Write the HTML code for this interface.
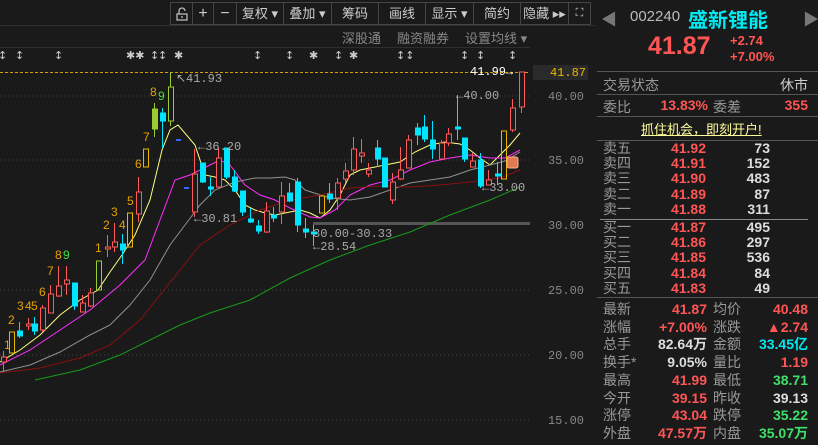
<!DOCTYPE html>
<html><head><meta charset="utf-8"><style>
*{margin:0;padding:0;box-sizing:border-box}
body{width:818px;height:445px;background:#1a1a1a;overflow:hidden;font-family:"Liberation Sans","Noto Sans CJK SC",sans-serif;position:relative;color:#aaa}
.a{position:absolute;white-space:nowrap}
.tb{position:absolute;top:2px;height:23px;border:1px solid #454545;color:#ccc;font-size:13px;text-align:center;line-height:21px}
.r{color:#ff5555}.g{color:#3ee06a}.w{color:#ddd}.c{color:#00e8f0}
.lb{font-size:14px;color:#999}
.v{font-size:14px;font-weight:bold;text-align:right}
.hl{position:absolute;left:597px;width:221px;height:1px;background:#555}
</style></head><body>
<svg class="a" style="left:0;top:0" width="595" height="445">
<line x1="0" y1="25.5" x2="595" y2="25.5" stroke="#2e2e2e"/>
<line x1="0" y1="47.5" x2="530" y2="47.5" stroke="#2e2e2e"/>
<g stroke="#444" stroke-dasharray="1,3">
<line x1="0" y1="96" x2="530" y2="96"/><line x1="0" y1="160" x2="530" y2="160"/><line x1="0" y1="290" x2="530" y2="290"/><line x1="0" y1="355" x2="530" y2="355"/><line x1="0" y1="420" x2="530" y2="420"/>
</g>
<rect x="313" y="222" width="217" height="3" fill="#555"/>
<line x1="0" y1="72.5" x2="530" y2="72.5" stroke="#d4a000" stroke-dasharray="3,2"/>
<g fill="none" stroke-width="1">
<polyline stroke="#ffff80" points="0,362 20,350 40,335 60,315 80,300 98,290 110,272 122,255 135,235 150,200 162,150 170,130 178,125 195,145 205,175 215,177 225,180 235,190 245,205 255,210 265,213 275,215 290,212 300,210 310,213 320,218 330,210 340,195 350,175 360,170 370,168 385,165 400,162 415,152 430,145 445,142 460,144 470,150 480,158 490,165 500,155 510,145 520,133"/>
<polyline stroke="#ff30ff" points="0,365 30,350 60,330 90,310 120,285 145,260 160,220 175,180 190,175 210,165 220,160 230,165 245,185 260,195 275,200 290,208 310,217 320,218 335,210 350,195 370,185 390,180 410,170 430,162 450,158 470,155 490,158 505,158 520,150"/>
<polyline stroke="#909090" points="0,372 30,365 60,352 90,335 110,325 130,305 150,280 170,245 185,225 200,205 215,190 235,182 255,178 270,178 285,177 295,180 305,190 330,198 350,200 370,197 390,190 410,183 430,180 450,177 470,170 490,165 505,161 520,152"/>
<polyline stroke="#8b1010" points="0,373 40,368 80,358 110,345 140,320 160,295 180,270 200,245 230,225 260,210 290,200 320,195 350,188 380,186 410,187 440,185 470,182 500,178 520,170"/>
<polyline stroke="#1a9a1a" points="35,380 80,370 120,355 150,340 180,325 210,313 250,300 290,278 330,260 370,245 410,232 450,215 490,200 520,187"/>
</g>
<g id="cd">
<!-- x,top,h,hi,lo -->
<g stroke="#ff5a5a" fill="#1a1a1a">
<line x1="3.5" y1="351" x2="3.5" y2="372"/><rect x="1.5" y="357" width="5" height="5"/>
<line x1="28.5" y1="318" x2="28.5" y2="330"/><rect x="26.5" y="324" width="5" height="2"/>
<line x1="42.5" y1="305" x2="42.5" y2="332"/><rect x="40.5" y="308" width="5" height="22"/>
<line x1="50.5" y1="285" x2="50.5" y2="313"/><rect x="48.5" y="294" width="5" height="19"/>
<line x1="58.5" y1="266" x2="58.5" y2="297"/><rect x="56.5" y="286" width="5" height="10"/>
<line x1="66.5" y1="266" x2="66.5" y2="295"/><rect x="64.5" y="280" width="5" height="4"/>
<line x1="82.5" y1="295" x2="82.5" y2="312"/><rect x="80.5" y="303" width="5" height="9"/>
<line x1="90.5" y1="288" x2="90.5" y2="307"/><rect x="88.5" y="293" width="5" height="13"/>
<line x1="107.5" y1="235" x2="107.5" y2="257"/><rect x="105.5" y="247" width="5" height="2"/>
<line x1="114.5" y1="223" x2="114.5" y2="252"/><rect x="112.5" y="242" width="5" height="5"/>
<line x1="138.5" y1="177" x2="138.5" y2="222"/><rect x="136.5" y="192" width="5" height="22"/>
<line x1="194.5" y1="149" x2="194.5" y2="217"/><rect x="192.5" y="174" width="5" height="38"/>
<line x1="218.5" y1="148" x2="218.5" y2="188"/><rect x="216.5" y="158" width="5" height="29"/>
<line x1="266.5" y1="202" x2="266.5" y2="233"/><rect x="264.5" y="211" width="5" height="21"/>
<line x1="281.5" y1="182" x2="281.5" y2="224"/><rect x="279.5" y="196" width="5" height="16"/>
<line x1="337.5" y1="178" x2="337.5" y2="210"/><rect x="335.5" y="183" width="5" height="15"/>
<line x1="345.5" y1="163" x2="345.5" y2="183"/><rect x="343.5" y="171" width="5" height="8"/>
<line x1="353.5" y1="137" x2="353.5" y2="175"/><rect x="351.5" y="149" width="5" height="21"/>
<line x1="361.5" y1="139" x2="361.5" y2="163"/><rect x="359.5" y="153" width="5" height="3"/>
<line x1="368.5" y1="163" x2="368.5" y2="177"/><rect x="366.5" y="170" width="5" height="4"/>
<line x1="392.5" y1="173" x2="392.5" y2="204"/><rect x="390.5" y="182" width="5" height="18"/>
<line x1="400.5" y1="147" x2="400.5" y2="180"/><rect x="398.5" y="170" width="5" height="9"/>
<line x1="408.5" y1="135" x2="408.5" y2="168"/><rect x="406.5" y="140" width="5" height="28"/>
<line x1="441.5" y1="140" x2="441.5" y2="160"/><rect x="439.5" y="143" width="5" height="16"/>
<line x1="448.5" y1="128" x2="448.5" y2="146"/><rect x="446.5" y="134" width="5" height="9"/>
<line x1="472.5" y1="153" x2="472.5" y2="167"/><rect x="470.5" y="161" width="5" height="6"/>
<line x1="488.5" y1="170" x2="488.5" y2="185"/><rect x="486.5" y="180" width="5" height="5"/>
<line x1="512.5" y1="99" x2="512.5" y2="132"/><rect x="510.5" y="108" width="5" height="22"/>
<line x1="521.5" y1="72" x2="521.5" y2="113"/><rect x="519.5" y="72" width="5" height="35"/>
</g>
<g stroke="#00e5ff" fill="#00e5ff">
<line x1="19.5" y1="322" x2="19.5" y2="338"/><rect x="17.5" y="331" width="5" height="5"/>
<line x1="34.5" y1="317" x2="34.5" y2="335"/><rect x="32.5" y="324" width="5" height="7"/>
<line x1="74.5" y1="283" x2="74.5" y2="310"/><rect x="72.5" y="283" width="5" height="23"/>
<line x1="122.5" y1="234" x2="122.5" y2="264"/><rect x="120.5" y="244" width="5" height="6"/>
<line x1="162.5" y1="108" x2="162.5" y2="148"/><rect x="160.5" y="113" width="5" height="8"/>
<line x1="202.5" y1="163" x2="202.5" y2="183"/><rect x="200.5" y="163" width="5" height="19"/>
<line x1="210.5" y1="177" x2="210.5" y2="196"/><rect x="208.5" y="187" width="5" height="2"/>
<line x1="226.5" y1="148" x2="226.5" y2="179"/><rect x="224.5" y="148" width="5" height="29"/>
<line x1="234.5" y1="170" x2="234.5" y2="192"/><rect x="232.5" y="177" width="5" height="14"/>
<line x1="242.5" y1="191" x2="242.5" y2="216"/><rect x="240.5" y="191" width="5" height="21"/>
<line x1="250.5" y1="208" x2="250.5" y2="223"/><rect x="248.5" y="219" width="5" height="3"/>
<line x1="258.5" y1="220" x2="258.5" y2="234"/><rect x="256.5" y="226" width="5" height="5"/>
<line x1="273.5" y1="207" x2="273.5" y2="222"/><rect x="271.5" y="215" width="5" height="3"/>
<line x1="289.5" y1="183" x2="289.5" y2="202"/><rect x="287.5" y="193" width="5" height="8"/>
<line x1="297.5" y1="178" x2="297.5" y2="232"/><rect x="295.5" y="182" width="5" height="43"/>
<line x1="305.5" y1="218" x2="305.5" y2="238"/><rect x="303.5" y="229" width="5" height="3"/>
<line x1="313.5" y1="225" x2="313.5" y2="246"/><rect x="311.5" y="232" width="5" height="2"/>
<line x1="329.5" y1="183" x2="329.5" y2="203"/><rect x="327.5" y="194" width="5" height="5"/>
<line x1="377.5" y1="140" x2="377.5" y2="167"/><rect x="375.5" y="148" width="5" height="11"/>
<line x1="384.5" y1="158" x2="384.5" y2="187"/><rect x="382.5" y="158" width="5" height="29"/>
<line x1="417.5" y1="123" x2="417.5" y2="145"/><rect x="415.5" y="128" width="5" height="7"/>
<line x1="424.5" y1="115" x2="424.5" y2="142"/><rect x="422.5" y="127" width="5" height="12"/>
<line x1="432.5" y1="121" x2="432.5" y2="159"/><rect x="430.5" y="140" width="5" height="9"/>
<line x1="457.5" y1="95" x2="457.5" y2="140"/><rect x="455.5" y="127" width="5" height="2"/>
<line x1="464.5" y1="138" x2="464.5" y2="162"/><rect x="462.5" y="138" width="5" height="21"/>
<line x1="480.5" y1="153" x2="480.5" y2="188"/><rect x="478.5" y="160" width="5" height="26"/>
<line x1="497.5" y1="162" x2="497.5" y2="185"/><rect x="495.5" y="174" width="5" height="2"/>
</g>
<g fill="none" stroke="#e8b800"><rect x="9.5" y="332" width="5" height="21"/><rect x="127.5" y="213" width="5" height="34"/><rect x="143.5" y="149" width="5" height="18"/><rect x="319.5" y="196" width="5" height="17"/><rect x="501.5" y="131" width="5" height="48"/></g>
<g stroke="#9acd32"><rect x="96.5" y="261" width="5" height="29" fill="none"/><line x1="154.5" y1="103" x2="154.5" y2="137"/><rect x="152.5" y="109" width="5" height="20" fill="#9acd32"/><line x1="170.5" y1="72" x2="170.5" y2="126"/><rect x="168.5" y="87" width="5" height="34" fill="#1a1a1a"/></g>
<rect x="176" y="139" width="5" height="2" fill="#3366ff"/><rect x="184" y="187" width="5" height="2" fill="#3366ff"/>
<rect x="507" y="157" width="11" height="11" rx="2" fill="#e07a50" stroke="#ffb090"/>
</g>
<g font-family="Liberation Mono,monospace" font-size="12" fill="#aaa">
<text x="176" y="82">↖41.93</text><text x="198" y="150">←36.20</text><text x="194" y="222">←30.81</text><text x="313" y="237">30.00-30.33</text><text x="313" y="250">←28.54</text><text x="456" y="99">←40.00</text><text x="482" y="191">←33.00</text><text x="470" y="75" fill="#fff">41.99→</text>
</g>
<g font-size="12" font-family="Liberation Sans,sans-serif" fill="#e8a000">
<text x="4" y="349">1</text><text x="8" y="324">2</text><text x="17" y="310">3</text><text x="25" y="310">4</text><text x="31" y="310">5</text><text x="39" y="296">6</text><text x="47" y="275">7</text><text x="55" y="259">8</text><text x="63" y="259" fill="#3ee03e">9</text><text x="95" y="252">1</text><text x="103" y="229">2</text><text x="111" y="216">3</text><text x="119" y="229">4</text><text x="127" y="205">5</text><text x="135" y="168">6</text><text x="143" y="141">7</text><text x="150" y="96">8</text><text x="158" y="100" fill="#3ee03e">9</text>
</g>
<g font-size="11" fill="#ccc" font-family="DejaVu Sans,sans-serif">
<text x="-2" y="59">↕</text><text x="15" y="59">↕</text><text x="54" y="59">↕</text><text x="126" y="59">✱✱</text><text x="150" y="59">↕</text><text x="158" y="59">↕</text><text x="174" y="59">✱</text><text x="253" y="59">↕</text><text x="285" y="59">↕</text><text x="309" y="59">✱</text><text x="334" y="59">↕</text><text x="349" y="59">✱</text><text x="396" y="59">↕↕</text><text x="460" y="59">↕</text><text x="476" y="59">↕</text><text x="508" y="59">↕</text>
</g>
<rect x="533" y="65" width="55" height="15" fill="#2a2a2a"/>
<g font-family="Liberation Mono,monospace" font-size="12" fill="#888" text-anchor="end">
<text x="586" y="76" fill="#e8b800">41.87</text><text x="584" y="100">40.00</text><text x="584" y="164">35.00</text><text x="584" y="229">30.00</text><text x="584" y="294">25.00</text><text x="584" y="359">20.00</text><text x="584" y="424">15.00</text>
</g>
<line x1="595.5" y1="0" x2="595.5" y2="445" stroke="#555"/>
</svg>
<div class="tb" style="left:170px;width:23px"><svg width="14" height="14" viewBox="0 0 14 14" style="margin-top:4px" fill="none" stroke="#bbb" stroke-width="1.3"><rect x="2" y="7" width="10" height="6"/><path d="M4 7V4a3 3 0 0 1 6 0"/><path d="M7 9v2"/></svg></div>
<div class="tb" style="left:192px;width:22px;font-size:16px">+</div>
<div class="tb" style="left:213px;width:24px;font-size:16px">−</div>
<div class="tb" style="left:236px;width:48px">复权 ▾</div>
<div class="tb" style="left:283px;width:49px">叠加 ▾</div>
<div class="tb" style="left:331px;width:48px">筹码</div>
<div class="tb" style="left:378px;width:48px">画线</div>
<div class="tb" style="left:425px;width:49px">显示 ▾</div>
<div class="tb" style="left:473px;width:48px">简约</div>
<div class="tb" style="left:520px;width:49px">隐藏 ▸▸</div>
<div class="tb" style="left:568px;width:23px;font-size:11px">⛶</div>
<div class="a" style="left:342px;top:28px;font-size:13px;color:#888">深股通</div>
<div class="a" style="left:397px;top:28px;font-size:13px;color:#888">融资融券</div>
<div class="a" style="left:465px;top:28px;font-size:13px;color:#888">设置均线 ▾</div>

<div class="a" style="left:601px;top:6px;font-size:16px;color:#777">◀</div>
<div class="a" style="left:630px;top:8px;font-size:15px;color:#bbb">002240</div>
<div class="a" style="left:688px;top:4px;font-size:20px;font-weight:bold;color:#00e8f0">盛新锂能</div>
<div class="a" style="left:803px;top:6px;font-size:16px;color:#777">▶</div>
<div class="a" style="left:648px;top:32px;font-size:25px;font-weight:bold;color:#ff5555">41.87</div>
<div class="a" style="left:730px;top:33px;font-size:13px;font-weight:bold;color:#ff5555">+2.74</div>
<div class="a" style="left:730px;top:49px;font-size:13px;font-weight:bold;color:#ff5555">+7.00%</div>
<div class="hl" style="top:71px"></div>
<div class="a lb" style="left:603px;top:75px">交易状态</div><div class="a" style="left:780px;top:75px;font-size:14px;color:#ccc">休市</div>
<div class="hl" style="top:94px"></div>
<div class="a lb" style="left:603px;top:97px">委比</div><div class="a v r" style="left:640px;width:68px;top:97px">13.83%</div><div class="a lb" style="left:713px;top:97px">委差</div><div class="a v r" style="left:760px;width:48px;top:97px">355</div>
<div class="hl" style="top:116px"></div>
<div class="a" style="left:641px;top:119px;font-size:13px;color:#ffff99;text-decoration:underline">抓住机会，即刻开户!</div>
<div class="hl" style="top:140px"></div>
<div class="a lb" style="left:603px;top:141px;line-height:15.2px">卖五<br>卖四<br>卖三<br>卖二<br>卖一</div>
<div class="a v r" style="left:650px;width:56px;top:141px;line-height:15.2px">41.92<br>41.91<br>41.90<br>41.89<br>41.88</div>
<div class="a v w" style="left:720px;width:50px;top:141px;line-height:15.2px">73<br>152<br>483<br>87<br>311</div>
<div class="a" style="left:600px;top:219px;width:208px;height:1px;background:#888"></div>
<div class="a lb" style="left:603px;top:220px;line-height:15.2px">买一<br>买二<br>买三<br>买四<br>买五</div>
<div class="a v r" style="left:650px;width:56px;top:220px;line-height:15.2px">41.87<br>41.86<br>41.85<br>41.84<br>41.83</div>
<div class="a v w" style="left:720px;width:50px;top:220px;line-height:15.2px">495<br>297<br>536<br>84<br>49</div>
<div class="hl" style="top:297px"></div>
<div class="a lb" style="left:603px;top:301px;line-height:17.7px">最新<br>涨幅<br>总手<br>换手*<br>最高<br>今开<br>涨停<br>外盘</div>
<div class="a v" style="left:640px;width:67px;top:301px;line-height:17.7px"><span class="r">41.87</span><br><span class="r">+7.00%</span><br><span class="w">82.64万</span><br><span class="w">9.05%</span><br><span class="r">41.99</span><br><span class="r">39.15</span><br><span class="r">43.04</span><br><span class="r">47.57万</span></div>
<div class="a lb" style="left:713px;top:301px;line-height:17.7px">均价<br>涨跌<br>金额<br>量比<br>最低<br>昨收<br>跌停<br>内盘</div>
<div class="a v" style="left:740px;width:68px;top:301px;line-height:17.7px"><span class="r">40.48</span><br><span class="r">▲2.74</span><br><span class="c">33.45亿</span><br><span class="r">1.19</span><br><span class="g">38.71</span><br><span class="w">39.13</span><br><span class="g">35.22</span><br><span class="g">35.07万</span></div>
</body></html>
